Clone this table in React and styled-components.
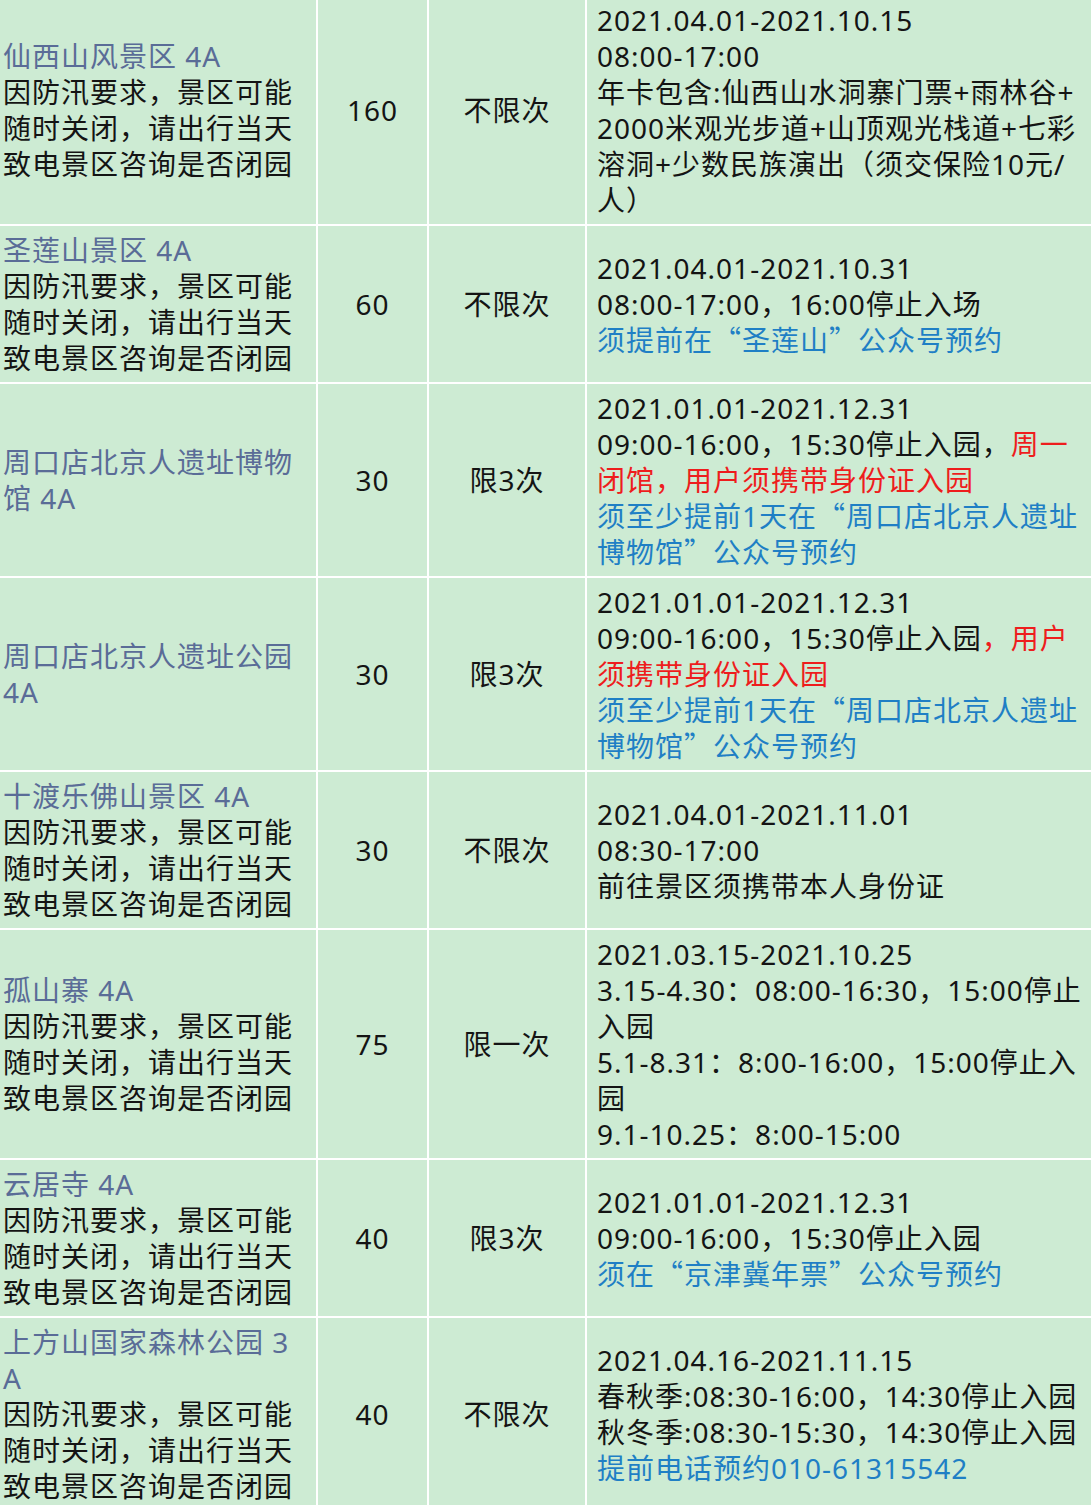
import React from 'react';
import styled, { createGlobalStyle } from 'styled-components';

const red = text => ({ tone: 'red', text });
const blue = text => ({ tone: 'blue', text });

const NOTE = ['因防汛要求，景区可能', '随时关闭，请出行当天', '致电景区咨询是否闭园'];

const spots = [
  {
    title: ['仙西山风景区 4A'],
    note: true,
    price: '160',
    times: '不限次',
    info: [
      '2021.04.01-2021.10.15',
      '08:00-17:00',
      '年卡包含:仙西山水洞寨门票+雨林谷+',
      '2000米观光步道+山顶观光栈道+七彩',
      '溶洞+少数民族演出（须交保险10元/',
      '人）'
    ]
  },
  {
    title: ['圣莲山景区 4A'],
    note: true,
    price: '60',
    times: '不限次',
    info: [
      '2021.04.01-2021.10.31',
      '08:00-17:00，16:00停止入场',
      [blue('须提前在“圣莲山”公众号预约')]
    ]
  },
  {
    title: ['周口店北京人遗址博物', '馆 4A'],
    price: '30',
    times: '限3次',
    info: [
      '2021.01.01-2021.12.31',
      ['09:00-16:00，15:30停止入园，', red('周一')],
      [red('闭馆，用户须携带身份证入园')],
      [blue('须至少提前1天在“周口店北京人遗址')],
      [blue('博物馆”公众号预约')]
    ]
  },
  {
    title: ['周口店北京人遗址公园', '4A'],
    price: '30',
    times: '限3次',
    info: [
      '2021.01.01-2021.12.31',
      ['09:00-16:00，15:30停止入园', red('，用户')],
      [red('须携带身份证入园')],
      [blue('须至少提前1天在“周口店北京人遗址')],
      [blue('博物馆”公众号预约')]
    ]
  },
  {
    title: ['十渡乐佛山景区 4A'],
    note: true,
    price: '30',
    times: '不限次',
    info: ['2021.04.01-2021.11.01', '08:30-17:00', '前往景区须携带本人身份证']
  },
  {
    title: ['孤山寨 4A'],
    note: true,
    price: '75',
    times: '限一次',
    info: [
      '2021.03.15-2021.10.25',
      '3.15-4.30：08:00-16:30，15:00停止',
      '入园',
      '5.1-8.31：8:00-16:00，15:00停止入',
      '园',
      '9.1-10.25：8:00-15:00'
    ]
  },
  {
    title: ['云居寺 4A'],
    note: true,
    price: '40',
    times: '限3次',
    info: [
      '2021.01.01-2021.12.31',
      '09:00-16:00，15:30停止入园',
      [blue('须在“京津冀年票”公众号预约')]
    ]
  },
  {
    title: ['上方山国家森林公园 3', 'A'],
    note: true,
    price: '40',
    times: '不限次',
    info: [
      '2021.04.16-2021.11.15',
      '春秋季:08:30-16:00，14:30停止入园',
      '秋冬季:08:30-15:30，14:30停止入园',
      [blue('提前电话预约010-61315542')]
    ]
  }
];

// curly quotes are set full width, as in the CJK font
function withQuotes(text) {
  return text.split(/([“”])/).map((part, i) =>
    part === '“' || part === '”' ? <Quote key={i}>{part}</Quote> : part
  );
}

function InfoLine({ line }) {
  const segs = typeof line === 'string' ? [line] : line;
  return (
    <Line>
      {segs.map((s, i) =>
        typeof s === 'string' ? (
          <Seg key={i}>{s}</Seg>
        ) : (
          <Seg key={i} $tone={s.tone}>
            {withQuotes(s.text)}
          </Seg>
        )
      )}
    </Line>
  );
}

function SpotRow({ title, note, price, times, info }) {
  return (
    <Row>
      <Cell>
        {title.map(t => (
          <Line key={t}>
            <Seg $tone="title">{t}</Seg>
          </Line>
        ))}
        {note && NOTE.map(n => <Line key={n}>{n}</Line>)}
      </Cell>
      <Cell $center>
        <Line>{price}</Line>
      </Cell>
      <Cell $center>
        <Line>{times}</Line>
      </Cell>
      <Cell>
        {info.map((line, i) => (
          <InfoLine line={line} key={i} />
        ))}
      </Cell>
    </Row>
  );
}

export default function App() {
  return (
    <>
      <GlobalStyle />
      <Table>
        {spots.map(s => (
          <SpotRow {...s} key={s.title.join('')} />
        ))}
      </Table>
    </>
  );
}

const GlobalStyle = createGlobalStyle`
  html, body {
    margin: 0;
    padding: 0;
    overflow: hidden;
    background: #ffffff;
  }

  body {
    font-family: "Noto Sans", "Noto Sans CJK SC", sans-serif;
    font-size: 28px;
    line-height: 36px;
    letter-spacing: 1px;
    color: #141414;
  }
`;

const tones = {
  title: '#5a6c97',
  blue: '#1f7fc5',
  red: '#ee1d1d'
};

const Table = styled.div`
  margin: -6px 0 0 -9px;
  width: max-content;
  padding: 2px;

  display: grid;
  row-gap: 2px;

  background: #ffffff;
`;

const Row = styled.div`
  display: grid;
  grid-template-columns: 323px 109px 156px 523px;
  column-gap: 2px;
`;

const Cell = styled.div`
  padding: 6px 10px;

  display: flex;
  flex-direction: column;
  justify-content: center;
  align-items: ${p => (p.$center ? 'center' : 'flex-start')};

  background: #cdebd3;
`;

const Line = styled.div`
  height: 36px;
  white-space: nowrap;
`;

const Seg = styled.span`
  color: ${p => tones[p.$tone] || 'inherit'};
`;

const Quote = styled.span`
  font-family: "Noto Sans CJK SC", sans-serif;
  line-height: 1;
`;
